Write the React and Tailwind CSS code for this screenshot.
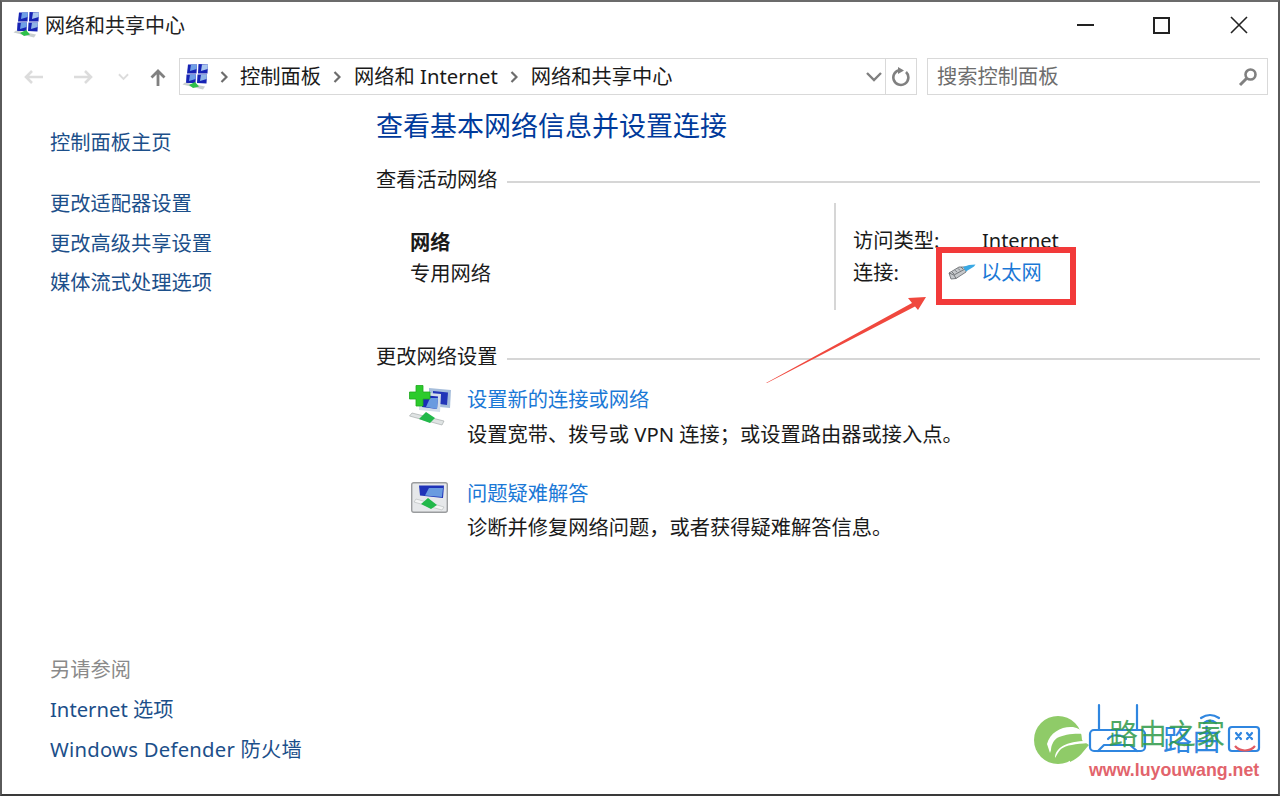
import React from "react";

function NetIcon({ className }) {
  return (
    <svg viewBox="0 0 26 26" className={className}>
      <path d="M6 0.5 L15 0.5 L14.5 9.5 L5 9.5 Z" fill="#1623b4" />
      <path d="M16.5 0 L26 0.5 L25.5 9.5 L16 9.5 Z" fill="#1623b4" />
      <path d="M4.5 10.5 L14 10.5 L13.5 19 L4 19 Z" fill="#1623b4" />
      <path d="M15.5 10.5 L25 10.5 L24.5 19.5 L15 19 Z" fill="#1623b4" />
      <path d="M9 0.5 L15 0.5 L14.7 5 L8 7 Z" fill="#6f9fe6" />
      <path d="M20 0.5 L26 0.5 L25.7 5 L19 7 Z" fill="#a9c6ee" />
      <path d="M8 10.5 L14 10.5 L13.7 15 L7 17 Z" fill="#6f9fe6" />
      <path d="M19 10.5 L25 10.5 L24.7 15 L18 17 Z" fill="#8fb4e6" />
      <path d="M0.5 20.5 L21 25.5 L23 22.5 L3 18.5 Z" fill="#c9cfcf" />
      <path d="M7 21 L13 18 L17 22.5 L11 24 Z" fill="#2fc04a" />
    </svg>
  );
}

function PlugIcon({ className }) {
  return (
    <svg viewBox="0 0 28 16" className={className}>
      <path d="M1 9 L11 3 L18 3 L18 8 L8 14.5 L3 15 Z" fill="#c5c8cb" stroke="#6f7377" strokeWidth="0.9" />
      <path d="M1 9 L6 11 L8 14.5 M6 11 L17 5 M4 8 L6 10 M7 6.2 L9 8.2 M10 4.4 L12 6.4 M13 3 L15 5" stroke="#5f6367" strokeWidth="0.8" fill="none" />
      <path d="M15 3 L21 1 L27.5 0.5 L26 2.5 L18 7.5 Z" fill="#3aa9e4" />
    </svg>
  );
}

function NewConnIcon({ className }) {
  return (
    <svg viewBox="0 0 42 42" className={className}>
      <path d="M20 3 L42 5 L41 23 L20 21 Z" fill="#a6bedb" />
      <path d="M24 6 L39 7.5 L38 20 L24 18 Z" fill="#2236b8" />
      <path d="M10 7 L32 9 L31 27 L10 25 Z" fill="#d4deea" />
      <path d="M13 10 L29 11.5 L28 24 L13 22 Z" fill="#1a2cb8" />
      <path d="M21 13 L29 13 L28 24 L17 22 Z" fill="#6a9be0" />
      <path d="M7 0.5 L14 0.5 L14 7 L21 7 L21 14 L14 14 L14 21 L7 21 L7 14 L0.5 14 L0.5 7 L7 7 Z" fill="#2ccb2c" stroke="#1fa81f" strokeWidth="0.8" />
      <path d="M0.5 31 L33 40 L35 36 L3 28 Z" fill="#dfe3e3" stroke="#a8aeae" strokeWidth="0.7" />
      <path d="M10 34 L17 27 L26 33 L21 38 Z" fill="#22b84a" />
    </svg>
  );
}

function TroubleIcon({ className }) {
  return (
    <svg viewBox="0 0 37 31" className={className}>
      <rect x="0.7" y="0.7" width="35.6" height="29.6" rx="2" fill="#e6e8ea" stroke="#9a9c9e" strokeWidth="1.4" />
      <path d="M8 3.5 L33 3.5 L32 16 L9 13.5 Z" fill="#1f33b8" />
      <path d="M18 6 L32 6 L31 15 L14 13.5 Z" fill="#6a9be0" />
      <path d="M3 20 L31 28 L33 25 L5 17 Z" fill="#f4f5f5" stroke="#a8aeae" strokeWidth="0.5" />
      <path d="M10 22 L17 16 L26 23 L20 27 Z" fill="#22b84a" />
    </svg>
  );
}

function Watermark() {
  return (
    <div className="absolute right-0 bottom-0 w-[260px] h-[106px] pointer-events-none">
      <svg viewBox="0 0 260 106" className="absolute inset-0 w-full h-full" fill="none">
        <circle cx="38" cy="50" r="24" fill="#8fcb68" />
        <path d="M50 72 C60 68 64 60 69 55 L50 42 Z" fill="#8fcb68" />
        <path d="M27 54 C30 42 42 36 53 37 C58 38 62 40 65 44 C56 43 44 44 37 48 C33 51 31 56 31 60 L30 63 Z" fill="#fff" />
        <path d="M35 68 C35 58 46 51 67 51 L68 53 C56 54 46 55 41 59 C38 62 37 65 35 68 Z" fill="#fff" />
        <g stroke="#2f86e0" strokeWidth="2.2" strokeLinecap="round" strokeLinejoin="round">
          <path d="M79 15 V39 M117 15 V39" />
          <rect x="70" y="40" width="55" height="21" rx="4" />
          <path d="M78 61 L84 55 H110 L117 61" />
          <path d="M88 49 C92 44 102 44 106 49" />
          <rect x="209" y="37" width="30" height="24" rx="3" />
          <path d="M216 43 L221 49 M221 43 L216 49 M227 43 L232 49 M232 43 L227 49" />
          <path d="M184 33 C188 30 192 30 196 33 M181 28 C187 24 193 24 199 28" />
        </g>
        <path d="M215 56 C220 62 230 62 235 56" stroke="#e25b62" strokeWidth="2.2" />
      </svg>
      <div className="absolute left-[143px] top-[31px] text-[29px] leading-[34px] text-[#2f86e0] whitespace-nowrap font-['Noto_Sans_CJK_SC',sans-serif]">路由</div>
      <div className="absolute left-[89px] top-[24px] text-[29px] leading-[36px] text-[#2f9a4a] opacity-85 whitespace-nowrap font-['Noto_Sans_CJK_SC',sans-serif]">路由之家</div>
      <div className="absolute left-[69px] top-[70px] text-[17.8px] leading-[20px] font-bold text-[#e2646c] whitespace-nowrap font-['Liberation_Sans',sans-serif]">www.luyouwang.net</div>
    </div>
  );
}

function Annotation() {
  return (
    <>
      <div className="absolute left-[936px] top-[247px] w-[140px] h-[58px] border-[6px] border-[#f23a3a]" />
      <svg className="absolute left-[760px] top-[290px] w-[170px] h-[95px]" viewBox="0 0 170 95">
        <path d="M6 93 L152 13 L148 8 L166 7 L158 20 L155 16.5 L7 93 Z" fill="#f0483e" />
      </svg>
    </>
  );
}

function Section({ title }) {
  return (
    <div className="flex items-center gap-[9px] h-[28px] text-[20.25px] text-[#1a1a1a]">
      <span className="whitespace-nowrap">{title}</span>
      <div className="flex-1 h-[2px] mt-[6px] bg-[#d6d6d6]" />
    </div>
  );
}

export default function App() {
  return (
    <div className="relative w-[1280px] h-[796px] overflow-hidden bg-white border-x-2 border-t-2 border-b-2 border-t-[#6b6b6b] border-x-[#5a5a5a] border-b-[#3a3a3a] font-['Noto_Sans','Noto_Sans_CJK_SC',sans-serif] text-[#1a1a1a] flex flex-col">
      {/* title bar */}
      <div className="flex items-center h-[46px] pl-[11px] shrink-0">
        <NetIcon className="w-[26px] h-[26px]" />
        <span className="ml-[6px] text-[20px] leading-none text-[#222] mt-[2px]">网络和共享中心</span>
        <div className="ml-auto flex items-center pr-[30px] gap-[60px]">
          <div className="w-[17px] h-[2px] bg-[#222]" />
          <div className="w-[17px] h-[17px] border-2 border-[#222] -ml-[1px]" />
          <svg viewBox="0 0 18 18" className="w-[18px] h-[18px]"><path d="M1 1 L17 17 M17 1 L1 17" stroke="#222" strokeWidth="1.6" /></svg>
        </div>
      </div>

      {/* nav row */}
      <div className="flex items-center h-[37px] mt-[10px] pl-[22px] shrink-0">
        <svg viewBox="0 0 20 16" className="w-[20px] h-[16px]"><path d="M19 8 H2 M8 2 L2 8 L8 14" stroke="#dcdcdc" strokeWidth="2.6" fill="none" /></svg>
        <svg viewBox="0 0 20 16" className="w-[20px] h-[16px] ml-[29px]"><path d="M1 8 H18 M12 2 L18 8 L12 14" stroke="#dcdcdc" strokeWidth="2.6" fill="none" /></svg>
        <svg viewBox="0 0 12 8" className="w-[11px] h-[8px] ml-[25px]"><path d="M1 1 L6 6 L11 1" stroke="#dcdcdc" strokeWidth="2" fill="none" /></svg>
        <svg viewBox="0 0 16 18" className="w-[16px] h-[18px] ml-[21px] mt-[3px]"><path d="M8 17 V2 M1.5 8.5 L8 2 L14.5 8.5" stroke="#808080" strokeWidth="2.8" fill="none" /></svg>
        <div className="flex items-center ml-[13px] w-[738px] h-[37px] border border-[#d9d9d9]">
          <NetIcon className="w-[26px] h-[26px] ml-[2px]" />
          <Crumb className="ml-[12px]" />
          <span className="ml-[12px] text-[20.25px]">控制面板</span>
          <Crumb className="ml-[12px]" />
          <span className="ml-[13px] text-[20.25px]">网络和 Internet</span>
          <Crumb className="ml-[12px]" />
          <span className="ml-[13px] text-[20.25px]">网络和共享中心</span>
          <div className="ml-auto flex items-center h-full">
            <svg viewBox="0 0 16 10" className="w-[16px] h-[10px] mr-[3px]"><path d="M1 1 L8 8 L15 1" stroke="#808080" strokeWidth="2.4" fill="none" /></svg>
            <div className="w-[1px] h-full bg-[#d9d9d9]" />
            <svg viewBox="0 0 20 20" className="w-[20px] h-[20px] mx-[5px]"><path d="M15 5 A7.5 7.5 0 1 1 9 3" stroke="#808080" strokeWidth="2.6" fill="none" /><path d="M7 0 L13 3.5 L7 7 Z" fill="#808080" /></svg>
          </div>
        </div>
        <div className="flex items-center ml-[10px] w-[341px] h-[37px] border border-[#d9d9d9] pl-[9px] pr-[9px]">
          <span className="text-[20.25px] text-[#6d6d6d]">搜索控制面板</span>
          <svg viewBox="0 0 20 20" className="w-[20px] h-[20px] ml-auto"><circle cx="12.5" cy="7.5" r="5" stroke="#808080" strokeWidth="2.6" fill="none" /><path d="M8.5 11.5 L2 18" stroke="#808080" strokeWidth="3" /></svg>
        </div>
      </div>

      {/* body */}
      <div className="flex flex-1 min-h-0">
        <aside className="w-[374px] shrink-0 pl-[48px] flex flex-col text-[20.25px] leading-[28px]">
          <a className="mt-[33px] text-[#1c4f8a]">控制面板主页</a>
          <a className="mt-[33px] text-[#1c4f8a]">更改适配器设置</a>
          <a className="mt-[12px] text-[#1c4f8a]">更改高级共享设置</a>
          <a className="mt-[11px] text-[#1c4f8a]">媒体流式处理选项</a>
          <div className="mt-auto flex flex-col mb-[31px]">
            <span className="text-[#8a8a8a]">另请参阅</span>
            <a className="mt-[12px] text-[#1c4f8a]">Internet 选项</a>
            <a className="mt-[12px] text-[#1c4f8a] tracking-[0.25px]">Windows Defender 防火墙</a>
          </div>
        </aside>

        <main className="flex-1 pr-[18px] flex flex-col">
          <h1 className="mt-[12px] text-[27px] leading-[38px] text-[#003a9b] font-normal whitespace-nowrap">查看基本网络信息并设置连接</h1>
          <div className="mt-[20px]"><Section title="查看活动网络" /></div>

          <div className="flex mt-[10px] h-[107px] text-[20.25px] leading-[31px]">
            <div className="w-[458px] pl-[34px] pt-[24px]">
              <div className="font-bold">网络</div>
              <div>专用网络</div>
            </div>
            <div className="w-[2px] bg-[#d6d6d6]" />
            <div className="pl-[17px] pt-[21px]">
              <div className="flex h-[32px] items-center"><span className="w-[129px]">访问类型:</span><span className="text-[20px]">Internet</span></div>
              <div className="flex items-center h-[32px]">
                <span className="w-[95px]">连接:</span>
                <PlugIcon className="w-[28px] h-[16px]" />
                <a className="ml-[5px] text-[#1a78d6]">以太网</a>
              </div>
            </div>
          </div>

          <div className="mt-[32px]"><Section title="更改网络设置" /></div>

          <div className="flex mt-[12px] pl-[33px]">
            <NewConnIcon className="w-[42px] h-[42px] mt-[3px]" />
            <div className="ml-[16px] text-[20.25px] leading-[35px]">
              <a className="block text-[#1a78d6]">设置新的连接或网络</a>
              <div>设置宽带、拨号或 VPN 连接；或设置路由器或接入点。</div>
            </div>
          </div>
          <div className="flex mt-[24px] pl-[35px]">
            <TroubleIcon className="w-[37px] h-[31px] mt-[6px]" />
            <div className="ml-[19px] text-[20.25px] leading-[34px]">
              <a className="block text-[#1a78d6]">问题疑难解答</a>
              <div>诊断并修复网络问题，或者获得疑难解答信息。</div>
            </div>
          </div>
        </main>
      </div>

      <Overlay />
    </div>
  );
}

function Overlay() {
  return (
    <div className="absolute -left-[2px] -top-[2px] w-[1280px] h-[796px] pointer-events-none">
      <Annotation />
      <Watermark />
    </div>
  );
}

function Crumb({ className }) {
  return (
    <svg viewBox="0 0 8 12" className={"w-[8px] h-[12px] " + className}><path d="M1.5 1 L6.5 6 L1.5 11" stroke="#6d6d6d" strokeWidth="2.2" fill="none" /></svg>
  );
}
